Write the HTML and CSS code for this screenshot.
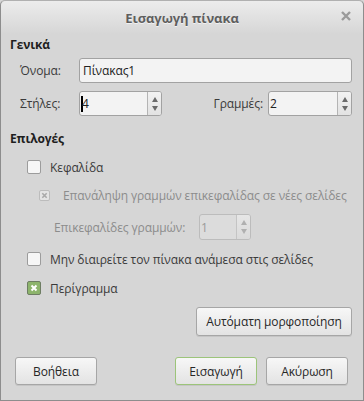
FILE: index.html
```html
<!DOCTYPE html>
<html lang="el">
<head>
    <meta charset="UTF-8">
    <title>Εισαγωγή πίνακα</title>
    <link rel="stylesheet" href="styles.css">
</head>
<body>
    <div class="window">
        <div class="titlebar">
            <span class="title">Εισαγωγή πίνακα</span>
            <svg class="close" width="10" height="10" viewBox="0 0 10 10">
                <path d="M1 1 L9 9 M9 1 L1 9" stroke="#9a9a9a" stroke-width="2.4"/>
            </svg>
        </div>
        <div class="content">
            <div class="section-title">Γενικά</div>
            <div class="row name-row">
                <label class="label">Όνομα:</label>
                <div class="entry">Πίνακας1</div>
            </div>
            <div class="row spin-row">
                <label class="label">Στήλες:</label>
                <div class="spin cols">
                    <div class="spin-text"><span class="caret"></span>4</div>
                    <div class="spin-buttons"><span class="up"></span><span class="down"></span></div>
                </div>
                <label class="label rows-label">Γραμμές:</label>
                <div class="spin rows">
                    <div class="spin-text">2</div>
                    <div class="spin-buttons"><span class="up"></span><span class="down"></span></div>
                </div>
            </div>

            <div class="section-title options-title">Επιλογές</div>
            <div class="check-row first">
                <span class="check"></span>
                <span>Κεφαλίδα</span>
            </div>
            <div class="check-row disabled indent">
                <span class="check small">
                    <svg width="7" height="7" viewBox="0 0 8 8"><path d="M1.5 1.5 L6.5 6.5 M6.5 1.5 L1.5 6.5" stroke="#a9a9a9" stroke-width="1.8"/></svg>
                </span>
                <span>Επανάληψη γραμμών επικεφαλίδας σε νέες σελίδες</span>
            </div>
            <div class="heading-rows disabled">
                <span class="heading-label">Επικεφαλίδες γραμμών:</span>
                <div class="spin small-spin">
                    <div class="spin-text">1</div>
                    <div class="spin-buttons"><span class="up"></span><span class="down"></span></div>
                </div>
            </div>
            <div class="check-row split">
                <span class="check"></span>
                <span>Μην διαιρείτε τον πίνακα ανάμεσα στις σελίδες</span>
            </div>
            <div class="check-row border">
                <span class="check checked">
                    <svg width="8" height="8" viewBox="0 0 8 8"><path d="M1.5 1.5 L6.5 6.5 M6.5 1.5 L1.5 6.5" stroke="#ffffff" stroke-width="2"/></svg>
                </span>
                <span>Περίγραμμα</span>
            </div>
            <div class="autoformat-row">
                <button class="btn autoformat">Αυτόματη μορφοποίηση</button>
            </div>
        </div>
        <div class="footer">
            <button class="btn help">Βοήθεια</button>
            <div class="spacer"></div>
            <button class="btn insert">Εισαγωγή</button>
            <button class="btn cancel">Ακύρωση</button>
        </div>
    </div>
</body>
</html>
```

FILE: styles.css
```css
body {
    margin: 0;
    font-family: "Open Sans", "Noto Sans", sans-serif;
    font-size: 12px;
    letter-spacing: -0.1px;
    color: #3a3a3a;
    background-color: #d6d6d6;
    white-space: nowrap;
}
.window {
    box-sizing: border-box;
    width: 364px;
    height: 401px;
    border: 1px solid #8d8d8d;
    border-top-color: #b0b0b0;
    border-radius: 5px 5px 0 0;
    background-color: #d6d6d6;
    display: flex;
    flex-direction: column;
}
.titlebar {
    height: 33px;
    flex-shrink: 0;
    display: flex;
    align-items: center;
    justify-content: center;
    position: relative;
    border-radius: 5px 5px 0 0;
    background: linear-gradient(#ececec, #d6d6d6);
}
.title {
    font-weight: bold;
    font-size: 13px;
    color: #5e5e5e;
    text-shadow: 0 1px 0 #f2f2f2;
}
.close {
    position: absolute;
    right: 12px;
    top: 10px;
}
.content {
    padding: 3px 11px 0 9px;
    flex: 1;
}
.section-title {
    font-weight: bold;
    height: 16px;
    line-height: 16px;
    color: #1e1e1e;
}
.options-title {
    margin-top: 15px;
}
.row {
    display: flex;
    align-items: center;
    padding-left: 10px;
}
.name-row {
    margin-top: 5px;
}
.spin-row {
    margin-top: 8px;
}
.label {
    width: 59px;
    flex-shrink: 0;
}
.entry {
    box-sizing: border-box;
    flex: 1;
    height: 25px;
    line-height: 23px;
    padding-left: 3px;
    border: 1px solid #a2a2a2;
    border-radius: 3px;
    background-color: #f3f3f3;
    color: #222;
}
.spin {
    box-sizing: border-box;
    display: flex;
    height: 25px;
    border: 1px solid #a2a2a2;
    border-radius: 3px;
    background-color: #f3f3f3;
    color: #222;
}
.spin.cols {
    width: 83px;
}
.spin.rows {
    width: 84px;
}
.rows-label {
    width: auto;
    margin-left: auto;
    margin-right: 5px;
}
.spin-text {
    flex: 1;
    display: flex;
    align-items: center;
    padding-left: 1px;
}
.caret {
    display: inline-block;
    width: 2px;
    height: 16px;
    background-color: #000;
    margin-right: -1px;
}
.spin-buttons {
    width: 13px;
    border-left: 1px solid #b4b4b4;
    border-radius: 0 2px 2px 0;
    background: linear-gradient(#f2f2f2, #e2e2e2);
    display: flex;
    flex-direction: column;
    align-items: center;
    justify-content: center;
    gap: 4px;
}
.up, .down {
    width: 0;
    height: 0;
    border-left: 3px solid transparent;
    border-right: 3px solid transparent;
}
.up {
    border-bottom: 5px solid #6a6a6a;
}
.down {
    border-top: 5px solid #6a6a6a;
}
.check-row {
    display: flex;
    align-items: center;
    gap: 9px;
    height: 16px;
    padding-left: 17px;
}
.check-row.first {
    margin-top: 12px;
}
.check-row.indent {
    margin-top: 12px;
    padding-left: 29px;
    gap: 13px;
}
.check {
    box-sizing: border-box;
    width: 14px;
    height: 14px;
    border: 1px solid #9c9c9c;
    border-radius: 2px;
    background-color: #f6f6f6;
    display: flex;
    align-items: center;
    justify-content: center;
}
.check.small {
    width: 11px;
    height: 11px;
    border-color: #bcbcbc;
    background-color: #e4e4e4;
}
.check.checked {
    background-color: #8db46c;
    border-color: #6e7d63;
}
.disabled {
    color: #8c8c8c;
}
.heading-rows {
    display: flex;
    align-items: center;
    gap: 5px;
    margin-top: 11px;
    padding-left: 44px;
}
.heading-label {
    width: 140px;
}
.small-spin {
    width: 52px;
    height: 26px;
    border-color: #bcbcbc;
    background-color: #dcdcdc;
    color: #9a9a9a;
}
.small-spin .spin-buttons {
    border-left-color: #c4c4c4;
    background: linear-gradient(#e6e6e6, #dadada);
}
.small-spin .up {
    border-bottom-color: #b0b0b0;
}
.small-spin .down {
    border-top-color: #b0b0b0;
}
.check-row.split {
    margin-top: 11px;
}
.check-row.border {
    margin-top: 13px;
}
.autoformat-row {
    display: flex;
    justify-content: flex-end;
    margin-top: 11px;
}
.btn {
    box-sizing: border-box;
    height: 29px;
    padding: 0;
    font-family: inherit;
    font-size: 12px;
    letter-spacing: inherit;
    color: #262626;
    border: 1px solid #a6a6a6;
    border-radius: 3px;
    background: linear-gradient(#f7f7f7, #e3e3e3);
    box-shadow: 0 1px 0 rgba(0, 0, 0, 0.08);
}
.autoformat {
    width: 156px;
}
.footer {
    display: flex;
    padding: 0 15px 15px 14px;
    gap: 9px;
}
.footer .btn {
    width: 82px;
    height: 28px;
}
.spacer {
    flex: 1;
}
.insert {
    border-color: #9cc47a;
}
```
